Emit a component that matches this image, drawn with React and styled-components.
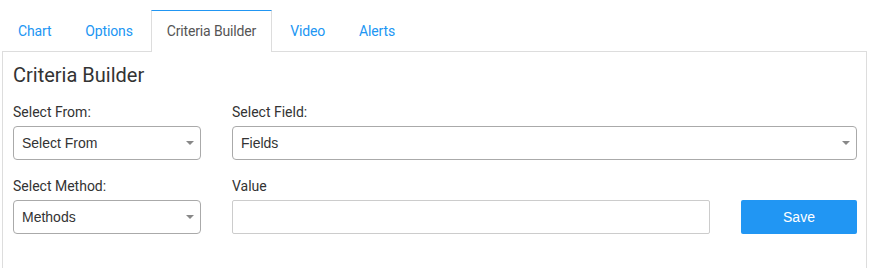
import React from "react";
import styled, { createGlobalStyle } from "styled-components";

const Global = createGlobalStyle`
  body {
    margin: 0;
    background: #fff;
    font-family: Roboto, "Liberation Sans", sans-serif;
  }
`;

const Page = styled.div`
  padding: 10px 13px 0 2px;
  height: 268px;
  box-sizing: border-box;
  overflow: hidden;
`;

const TabList = styled.ul`
  display: flex;
  gap: 2px;
  list-style: none;
  margin: 0 0 -1px 0;
  padding: 0;
  position: relative;
  z-index: 1;
`;

const Tab = styled.li`
  box-sizing: border-box;
  height: 42px;
  padding: 10px 15px 0;
  font-size: 14px;
  line-height: 20px;
  letter-spacing: -0.15px;
  border: 1px solid transparent;
  border-bottom: 0;
  color: #2196f3;
  background: transparent;
  cursor: pointer;

  ${(p) =>
    p.$active &&
    `
    color: #555;
    background: #fff;
    border-color: #ddd;
    border-top-color: #2196f3;
  `}
`;

const Panel = styled.div`
  border: 1px solid #ddd;
  border-bottom: 0;
  height: 240px;
  padding: 0 9px 0 10px;
`;

const Heading = styled.h3`
  margin: 11px 0 15px;
  font-size: 20px;
  line-height: 24px;
  font-weight: 400;
  color: #333;
`;

const Form = styled.div`
  display: grid;
  grid-template-columns: 188px 1fr 116px;
  column-gap: 31px;
  row-gap: 16px;
`;

const Field = styled.div`
  display: flex;
  flex-direction: column;
  grid-column: ${(p) => p.$span || "auto"};
`;

const Label = styled.label`
  font-size: 14px;
  line-height: 20px;
  color: #333;
  margin-bottom: 4px;
`;

const SelectBox = styled.div`
  box-sizing: border-box;
  height: 34px;
  display: flex;
  align-items: center;
  justify-content: space-between;
  padding: 0 6px 0 8px;
  border: 1px solid #aaa;
  border-radius: 4px;
  font-family: "Liberation Sans", Arial, sans-serif;
  font-size: 14px;
  color: #333;
  background: #fff;
`;

const Arrow = styled.span`
  width: 0;
  height: 0;
  border-left: 4px solid transparent;
  border-right: 4px solid transparent;
  border-top: 4px solid #888;
`;

const Input = styled.input`
  box-sizing: border-box;
  height: 34px;
  width: 100%;
  border: 1px solid #ccc;
  border-radius: 2px;
  padding: 0 8px;
  font-family: "Liberation Sans", Arial, sans-serif;
  font-size: 14px;
  outline: none;
`;

const SaveButton = styled.button`
  align-self: end;
  box-sizing: border-box;
  height: 34px;
  border: 0;
  border-radius: 2px;
  background: #2196f3;
  color: #fff;
  font-family: "Liberation Sans", Arial, sans-serif;
  font-size: 14px;
  cursor: pointer;
`;

function Select({ value }) {
  return (
    <SelectBox>
      <span>{value}</span>
      <Arrow />
    </SelectBox>
  );
}

const tabs = ["Chart", "Options", "Criteria Builder", "Video", "Alerts"];

export default function App() {
  return (
    <Page>
      <Global />
      <TabList>
        {tabs.map((t) => (
          <Tab key={t} $active={t === "Criteria Builder"}>
            {t}
          </Tab>
        ))}
      </TabList>
      <Panel>
        <Heading>Criteria Builder</Heading>
        <Form>
          <Field>
            <Label>Select From:</Label>
            <Select value="Select From" />
          </Field>
          <Field $span="2 / 4">
            <Label>Select Field:</Label>
            <Select value="Fields" />
          </Field>
          <Field>
            <Label>Select Method:</Label>
            <Select value="Methods" />
          </Field>
          <Field>
            <Label>Value</Label>
            <Input type="text" />
          </Field>
          <SaveButton>Save</SaveButton>
        </Form>
      </Panel>
    </Page>
  );
}
